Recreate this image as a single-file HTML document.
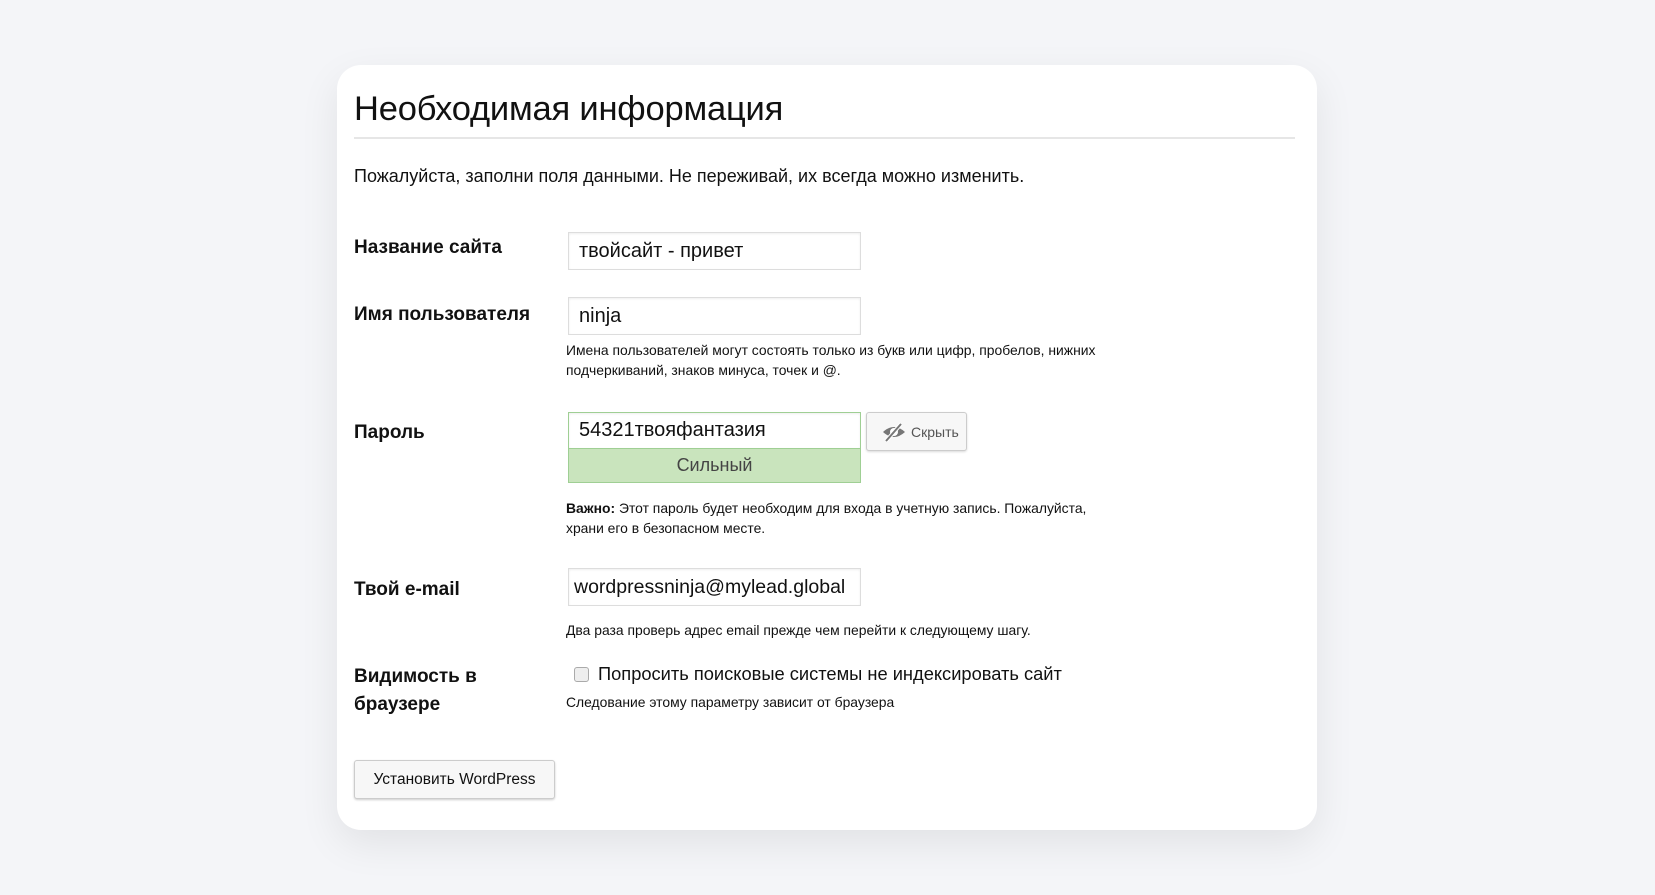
<!DOCTYPE html>
<html><head><meta charset="utf-8"><style>
*{margin:0;padding:0;box-sizing:border-box}
body{width:1655px;height:895px;background:#f4f5f8;font-family:"Liberation Sans","Noto Sans CJK SC",sans-serif;color:#111;position:relative;overflow:hidden}
.card{position:absolute;left:337px;top:65px;width:980px;height:765px;background:#fff;border-radius:24px;box-shadow:0 14px 40px rgba(0,0,0,0.08)}
.a{position:absolute;white-space:nowrap}
h1{position:absolute;left:354px;top:90px;font-size:34.5px;font-weight:normal;letter-spacing:-0.2px;color:#111}
.hr{position:absolute;left:354px;top:137px;width:941px;height:2px;background:#e6e6e6}
.lbl{font-weight:bold;font-size:19px;color:#111}
.inp{position:absolute;border:1px solid #ddd;box-shadow:inset 0 1px 2px rgba(0,0,0,0.07);background:#fff;font-size:20px;padding-left:10px;display:flex;align-items:center}
.help{font-size:13.9px;color:#111;line-height:20px}
</style></head><body>
<div class="card"></div>
<h1>Необходимая информация</h1>
<div class="hr"></div>
<div class="a" style="left:354px;top:166px;font-size:18px">Пожалуйста, заполни поля данными. Не переживай, их всегда можно изменить.</div>

<div class="a lbl" style="left:354px;top:237px">Название сайта</div>
<div class="inp" style="left:568px;top:232px;width:293px;height:38px">твойсайт - привет</div>

<div class="a lbl" style="left:354px;top:304px">Имя пользователя</div>
<div class="inp" style="left:568px;top:297px;width:293px;height:38px">ninja</div>
<div class="a help" style="left:566px;top:340px">Имена пользователей могут состоять только из букв или цифр, пробелов, нижних<br>подчеркиваний, знаков минуса, точек и @.</div>

<div class="a lbl" style="left:354px;top:422px">Пароль</div>
<div class="inp" style="left:568px;top:412px;width:293px;height:37px;border-color:#9fcf94">54321твояфантазия</div>
<div class="a" style="left:568px;top:449px;width:293px;height:34px;background:#c9e4bd;border:1px solid #9fcf94;border-top:none;text-align:center;font-size:18px;line-height:33px;color:#444">Сильный</div>
<div class="a" style="left:866px;top:412px;width:101px;height:39px;border:1px solid #ccc;border-radius:3px;background:#f7f7f7;box-shadow:0 1px 2px rgba(0,0,0,0.15);font-size:14px;color:#555;display:flex;align-items:center;padding-left:14px">
<svg width="26" height="20" viewBox="0 0 26 20" style="margin-right:4px"><path d="M2 10 Q13 0 24 10 Q13 20 2 10Z" fill="#777"/><circle cx="13" cy="10" r="4" fill="#fff"/><path d="M5 19 L20 2" stroke="#fff" stroke-width="4"/><path d="M5 19 L20 2" stroke="#777" stroke-width="2"/></svg>Скрыть</div>
<div class="a help" style="left:566px;top:498px"><b>Важно:</b> Этот пароль будет необходим для входа в учетную запись. Пожалуйста,<br>храни его в безопасном месте.</div>

<div class="a lbl" style="left:354px;top:579px">Твой e-mail</div>
<div class="inp" style="left:568px;top:568px;width:293px;height:38px;padding-left:5px;font-size:19.5px">wordpressninja@mylead.global</div>
<div class="a help" style="left:566px;top:620px">Два раза проверь адрес email прежде чем перейти к следующему шагу.</div>

<div class="a lbl" style="left:354px;top:663px;line-height:28px">Видимость в<br>браузере</div>
<div class="a" style="left:574px;top:667px;width:15px;height:15px;border:1px solid #aaa;border-radius:3px;background:#eee"></div>
<div class="a" style="left:598px;top:663px;font-size:18.3px">Попросить поисковые системы не индексировать сайт</div>
<div class="a help" style="left:566px;top:692px">Следование этому параметру зависит от браузера</div>

<div class="a" style="left:354px;top:760px;width:201px;height:39px;border:1px solid #ccc;border-radius:3px;background:#f7f7f7;box-shadow:0 1px 2px rgba(0,0,0,0.2);font-size:15.5px;text-align:center;line-height:37px">Установить WordPress</div>
</body></html>
